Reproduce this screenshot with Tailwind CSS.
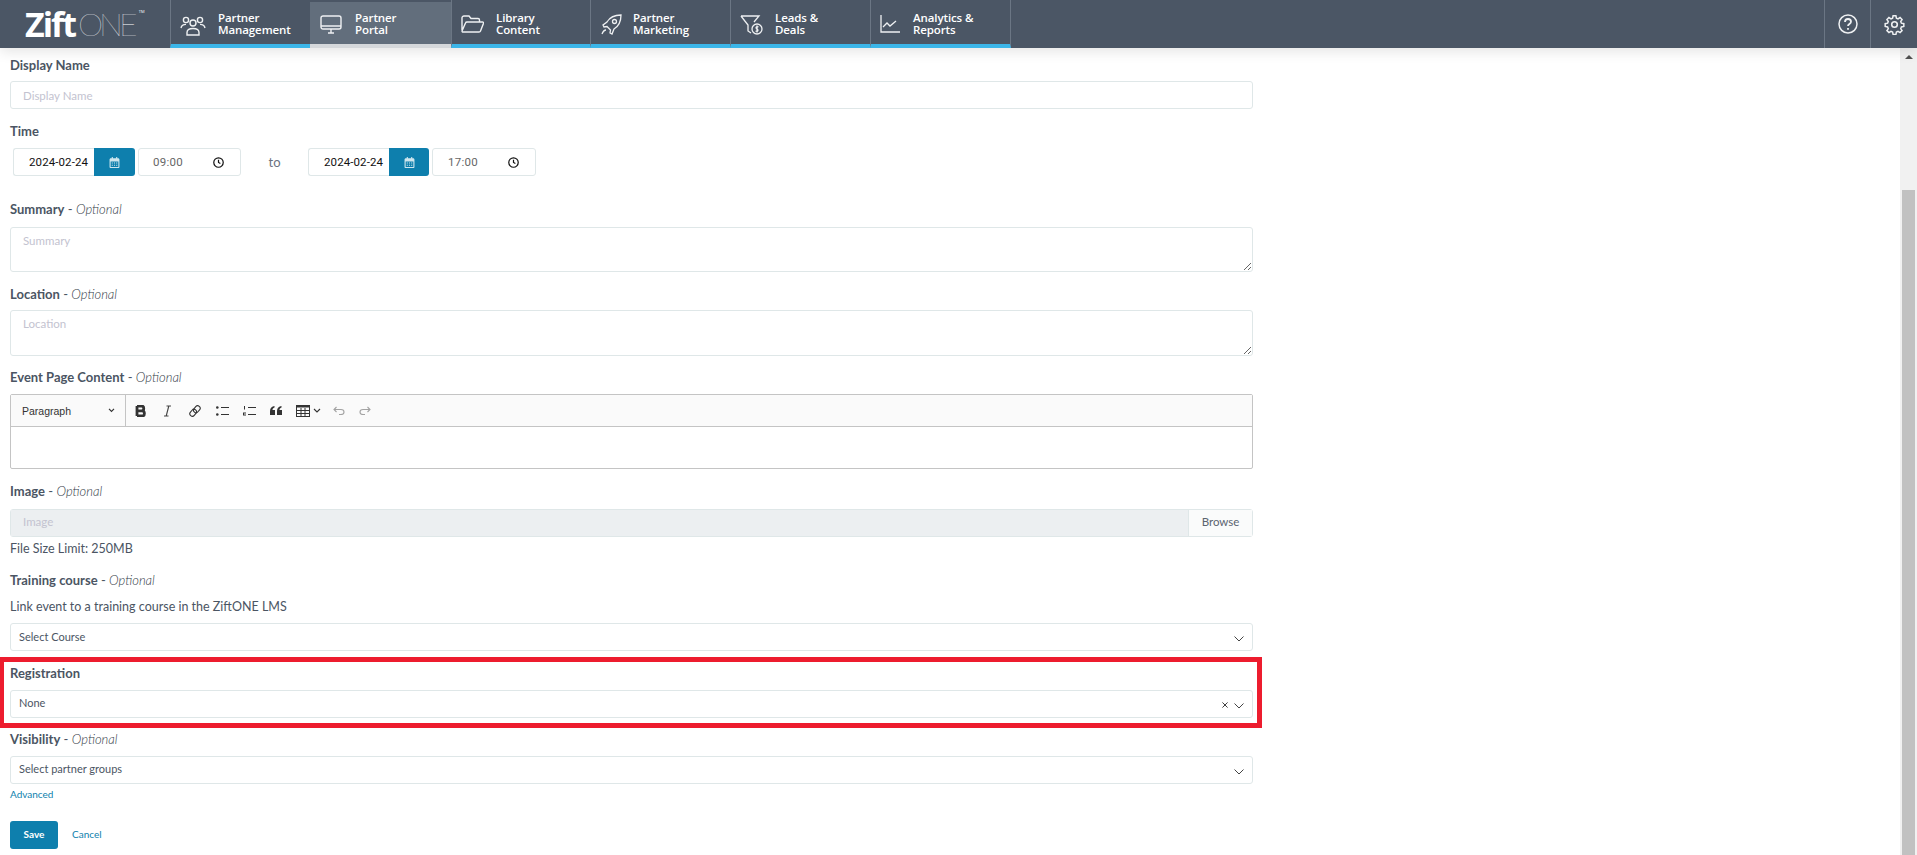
<!DOCTYPE html>
<html lang="en">
<head>
<meta charset="UTF-8">
<title>ZiftONE - Edit Event</title>
<script src="https://cdn.jsdelivr.net/npm/@tailwindcss/browser@4"></script>
</head>
<body class="h-[855px] w-[1917px] overflow-hidden bg-white font-['Lato',sans-serif] text-[#4b5563] flex flex-col">

<!-- Top nav -->
<header class="relative z-10 h-12 shrink-0 flex bg-[#4b5665] shadow-[0_4px_12px_rgba(0,0,0,0.10)] text-white">
  <div class="w-[170px] shrink-0 pl-[25px] flex items-start pt-[4px] font-['Open_Sans',sans-serif] leading-[40px]">
    <span class="text-[34px] font-bold tracking-[-2px]">Zift</span>
    <span class="ml-[3px] text-[32px] font-['Lato',sans-serif] font-thin tracking-[-4px]">ONE</span>
    <span class="text-[4px] leading-[16px] ml-[5px]">TM</span>
  </div>

  <nav class="flex font-['Open_Sans',sans-serif] text-[11.5px] font-semibold leading-[12px] tracking-[-0.1px]">
    <a class="w-[140px] h-12 border-l border-[#6b7684] border-b-4 border-b-[#3bb5e8] flex items-start pt-[12px] pl-[9px] gap-[12px]">
      <svg class="w-[26px] h-[24px] mt-[2px]" viewBox="0 0 26 24" fill="none" stroke="#eef0f2" stroke-width="1.4"><circle cx="6" cy="6" r="2.6"/><circle cx="20" cy="6" r="2.6"/><circle cx="13" cy="9" r="3"/><path d="M1 14c.5-2.5 2.5-3.6 5-3.6M25 14c-.5-2.5-2.500-3.600-5-3.600M7 21v-2.500c0-2.500 2.500-4 6-4s6 1.500 6 4V21z"/></svg>
      <span>Partner<br>Management</span>
    </a>
    <a class="w-[141px] h-[46px] mt-[2px] bg-[#626e7c] border-b-4 border-b-[#d5d8db] flex items-start pt-[10px] pl-[10px] gap-[12px]">
      <svg class="w-[22px] h-[20px] mt-[3px]" viewBox="0 0 22 20" fill="none" stroke="#eef0f2" stroke-width="1.4"><rect x="1" y="1" width="20" height="13" rx="2"/><path d="M1 11h20M8 18h6M11 14v4"/></svg>
      <span class="ml-[1px]">Partner<br>Portal</span>
    </a>
    <a class="w-[139px] h-12 border-l border-[#6b7684] border-b-4 border-b-[#3bb5e8] flex items-start pt-[12px] pl-[9px] gap-[12px]">
      <svg class="w-[23px] h-[18px] mt-[3px]" viewBox="0 0 23 18" fill="none" stroke="#eef0f2" stroke-width="1.400"><path d="M1 15V3c0-1 .7-2 2-2h5l2 2.500h7c1 0 1.500.7 1.500 1.500v2M1 16l3.500-8c.2-.6.800-1 1.500-1h15.500c.8 0 1.200.7 1 1.300L19.500 16c-.2.600-.7 1-1.500 1H2c-.7 0-1-.5-1-1z"/></svg>
      <span>Library<br>Content</span>
    </a>
    <a class="w-[140px] h-12 border-l border-[#6b7684] border-b-4 border-b-[#3bb5e8] flex items-start pt-[12px] pl-[9px] gap-[11px]">
      <svg class="w-[22px] h-[22px] mt-[2px]" viewBox="0 0 22 22" fill="none" stroke="#eef0f2" stroke-width="1.300"><path d="M7 8c3-5 8-7 14-7 0 6-2 11-7 14l-2 5-2-1 .5-3-3.500-3.500-3 .5-1-2zM6 16c-2 0-3 1.500-4 4"/><circle cx="14.500" cy="7.500" r="2"/></svg>
      <span>Partner<br>Marketing</span>
    </a>
    <a class="w-[140px] h-12 border-l border-[#6b7684] border-b-4 border-b-[#3bb5e8] flex items-start pt-[12px] pl-[9px] gap-[12px]">
      <svg class="w-[23px] h-[20px] mt-[3px]" viewBox="0 0 23 20" fill="none" stroke="#eef0f2" stroke-width="1.300"><path d="M1 1h18l-5 6M1 1l7 9v6l3 2"/><circle cx="17" cy="14" r="5"/><path d="M18.500 12c-2-1-3.500 1-1.500 2s.5 3-1.500 2M17 10.500v7"/></svg>
      <span>Leads &amp;<br>Deals</span>
    </a>
    <a class="w-[141px] h-12 border-l border-r border-[#6b7684] border-b-4 border-b-[#3bb5e8] flex items-start pt-[12px] pl-[9px] gap-[13px]">
      <svg class="w-[20px] h-[18px] mt-[3px]" viewBox="0 0 20 18" fill="none" stroke="#eef0f2" stroke-width="1.300"><path d="M1 0v17h19M3 12l4-4 3 3 6-5"/></svg>
      <span>Analytics &amp;<br>Reports</span>
    </a>
  </nav>

  <div class="ml-auto flex h-12">
    <div class="w-[46px] border-l border-[#6b7684] flex items-center justify-center">
      <svg class="w-5 h-5" viewBox="0 0 20 20" fill="none" stroke="#eef0f2" stroke-width="1.500"><circle cx="10" cy="10" r="9"/><path d="M7 8c0-2 1.300-3 3-3s3 1 3 2.700c0 2.300-3 2.300-3 4.300" stroke-width="1.800"/><path d="M10 14v1.800" stroke-width="1.800"/></svg>
    </div>
    <div class="w-[47px] border-l border-[#6b7684] flex items-center justify-center">
      <svg class="w-[21px] h-[21px]" viewBox="0 0 24 24" fill="none" stroke="#eef0f2" stroke-width="1.800"><circle cx="12" cy="12" r="3.200"/><path d="M10.300 2h3.400l.6 2.900 1.900.8 2.500-1.600 2.400 2.400-1.600 2.500.8 1.900 2.900.6v3.400l-2.900.6-.8 1.900 1.600 2.500-2.400 2.400-2.500-1.600-1.900.8-.6 2.900h-3.400l-.6-2.900-1.900-.8-2.500 1.600-2.400-2.400 1.600-2.500-.8-1.900-2.900-.6v-3.400l2.900-.6.8-1.900-1.600-2.500 2.400-2.400 2.500 1.600 1.900-.8z" transform="translate(12 12) scale(.95) translate(-12 -12.500)"/></svg>
    </div>
  </div>
</header>

<div class="flex flex-1 min-h-0">
  <!-- Form -->
  <main class="flex-1 pl-[10px] pt-[7px] text-[13px] leading-[18px]">
    <div class="w-[1243px]">

      <label class="block h-5 leading-5 font-bold">Display Name</label>
      <input placeholder="Display Name" class="mt-[6px] block w-full h-7 px-3 text-[11.500px] bg-white border border-[#dfe7e8] rounded-[3px] placeholder:text-[#c3c3d0]">

      <label class="block h-5 mt-[13px] font-bold">Time</label>
      <div class="mt-[6px] flex items-center h-7 font-['Roboto',sans-serif] text-[11.500px] whitespace-nowrap">
        <div class="ml-[3px] w-[81px] h-7 flex items-center pl-[15px] border border-r-0 border-[#dfe7e8] rounded-l-[3px] text-[#111] tracking-[0.1px]">2024-02-24</div>
        <div class="w-[41px] h-7 bg-[#0e7fad] rounded-r-[3px] flex items-center justify-center">
          <svg class="w-[11px] h-[11px]" viewBox="0 0 9 10" fill="#cfe6ee"><path d="M0 2.500C0 1.700.5 1.200 1.200 1.200H2V0h1v1.200h3V0h1v1.200h.8c.7 0 1.200.5 1.200 1.300V9c0 .6-.5 1-1 1H1c-.5 0-1-.4-1-1zM1 4v5h7V4z"/><path d="M2 5h1v1H2zM4 5h1v1H4zM6 5h1v1H6zM2 7h1v1H2zM4 7h1v1H4zM6 7h1v1H6z"/></svg>
        </div>
        <div class="ml-[3px] w-[103px] h-7 flex items-center justify-between pl-[14px] pr-[16px] border border-[#dfe7e8] rounded-[3px] text-[#666] tracking-[0.3px]">09:00
          <svg class="w-[11px] h-[11px]" viewBox="0 0 10 10" fill="none" stroke="#111" stroke-width="1.100"><circle cx="5" cy="5" r="4.300"/><path d="M5 2.500V5l1.700 1"/></svg>
        </div>
        <span class="w-[67px] pb-[1px] text-center text-[13px] font-['Lato',sans-serif] text-[#6b7280]">to</span>
        <div class="w-[81px] h-7 flex items-center pl-[15px] border border-r-0 border-[#dfe7e8] rounded-l-[3px] text-[#111] tracking-[0.1px]">2024-02-24</div>
        <div class="w-[40px] h-7 bg-[#0e7fad] rounded-r-[3px] flex items-center justify-center">
          <svg class="w-[11px] h-[11px]" viewBox="0 0 9 10" fill="#cfe6ee"><path d="M0 2.500C0 1.700.5 1.200 1.200 1.200H2V0h1v1.200h3V0h1v1.200h.8c.7 0 1.200.5 1.200 1.300V9c0 .6-.5 1-1 1H1c-.5 0-1-.4-1-1zM1 4v5h7V4z"/><path d="M2 5h1v1H2zM4 5h1v1H4zM6 5h1v1H6zM2 7h1v1H2zM4 7h1v1H4zM6 7h1v1H6z"/></svg>
        </div>
        <div class="ml-[3px] w-[104px] h-7 flex items-center justify-between pl-[15px] pr-[16px] border border-[#dfe7e8] rounded-[3px] text-[#666] tracking-[0.3px]">17:00
          <svg class="w-[11px] h-[11px]" viewBox="0 0 10 10" fill="none" stroke="#111" stroke-width="1.100"><circle cx="5" cy="5" r="4.300"/><path d="M5 2.500V5l1.700 1"/></svg>
        </div>
      </div>

      <label class="block h-5 mt-[24px]"><b>Summary</b> - <i class="font-light text-[#333b47]">Optional</i></label>
      <textarea placeholder="Summary" class="mt-[7px] block w-full h-[45px] px-3 py-[5px] text-[11.500px] leading-4 border border-[#dfe7e8] rounded-[3px] placeholder:text-[#c3c3d0]"></textarea>

      <label class="block h-5 mt-[13px]"><b>Location</b> - <i class="font-light text-[#333b47]">Optional</i></label>
      <textarea placeholder="Location" class="mt-[5px] block w-full h-[46px] px-3 py-[5px] text-[11.500px] leading-4 border border-[#dfe7e8] rounded-[3px] placeholder:text-[#c3c3d0]"></textarea>

      <label class="block h-5 mt-[12px]"><b>Event Page Content</b> - <i class="font-light text-[#333b47]">Optional</i></label>
      <div class="mt-[6px] h-[75px] border border-[#c4c4c4] rounded-[2px]">
        <div class="h-[32px] bg-[#fafafa] border-b border-[#c4c4c4] flex items-center text-[#333]">
          <div class="w-[115px] h-full border-r border-[#c4c4c4] flex items-center justify-between pl-[11px] pr-[10px] font-['Liberation_Sans',sans-serif] text-[10.500px]">
            <span>Paragraph</span>
            <svg class="w-[7px] h-[5px]" viewBox="0 0 8 6" fill="none" stroke="#333" stroke-width="1.400"><path d="M1 1l3 3 3-3"/></svg>
          </div>
          <svg class="ml-[9px] w-[11px] h-[12px]" viewBox="0 0 11 12" fill="none" stroke="#333" stroke-width="2.800"><path d="M2 1v10M2 1h4.500c3 0 3 4.800 0 4.800H2M2 5.800h5c3.200 0 3.200 5.200 0 5.200H2"/></svg>
          <svg class="ml-[18px] w-[7px] h-[12px]" viewBox="0 0 7 12" fill="none" stroke="#444" stroke-width="1.100"><path d="M2.500 1H7M0 11h4.500M4.800 1L2.200 11"/></svg>
          <svg class="ml-[18px] w-[12px] h-[12px]" viewBox="0 0 12 12" fill="none" stroke="#333" stroke-width="1.100"><rect x="5.500" y=".5" width="5" height="7.500" rx="2.500" transform="rotate(40 8 4)"/><rect x="1.500" y="4" width="5" height="7.500" rx="2.500" transform="rotate(40 4 8)"/></svg>
          <svg class="ml-[15px] w-[13px] h-[10px]" viewBox="0 0 13 10" fill="#333"><circle cx="1.300" cy="1.500" r="1.300"/><circle cx="1.300" cy="8.500" r="1.300"/><path d="M5 1h8v1H5zM5 8h8v1H5z"/></svg>
          <svg class="ml-[14px] w-[13px] h-[10px]" viewBox="0 0 13 10" fill="#333"><path d="M1 0h1v3.500H1zM0 6.500h3v1H1V8.500h2v1H0zM5 1h8v1H5zM5 8h8v1H5z"/></svg>
          <svg class="ml-[14px] w-[12px] h-[9px]" viewBox="0 0 12 9" fill="#333"><path d="M0 5c0-3 2-4.500 4.500-5v1.500C3.200 2 2.500 3 2.500 4H5v5H0zM7 5c0-3 2-4.500 4.500-5v1.500C10.200 2 9.500 3 9.500 4H12v5H7z"/></svg>
          <svg class="ml-[14px] w-[14px] h-[12px]" viewBox="0 0 14 12" fill="none" stroke="#333"><rect x=".5" y=".5" width="13" height="11"/><path d="M0 1.500h14" stroke-width="2"/><path d="M5 3v8M9 3v8M1 5.500h12M1 8.500h12"/></svg>
          <svg class="ml-[3px] w-[8px] h-[6px]" viewBox="0 0 8 6" fill="none" stroke="#333" stroke-width="1.100"><path d="M1 1l3 3 3-3"/></svg>
          <svg class="ml-[12px] w-[12px] h-[9px]" viewBox="0 0 12 9" fill="none" stroke="#a3a3a3" stroke-width="1.100"><path d="M3.500 1L1 3.500 3.500 6M1 3.500h7c4 0 4 5 0 5H6"/></svg>
          <svg class="ml-[14px] w-[12px] h-[9px]" viewBox="0 0 12 9" fill="none" stroke="#a3a3a3" stroke-width="1.100"><path d="M8.500 1L11 3.500 8.500 6M11 3.500H4c-4 0-4 5 0 5h2"/></svg>
        </div>
      </div>

      <label class="block h-5 mt-[13px]"><b>Image</b> - <i class="font-light text-[#333b47]">Optional</i></label>
      <div class="mt-[7px] flex h-7 border border-[#dfe7e8] rounded-[3px] text-[11.500px]">
        <div class="flex-1 bg-[#eceff1] pl-3 leading-[24px] text-[#c3c3d0]">Image</div>
        <div class="w-[64px] border-l border-[#dfe7e8] bg-[#fafbfb] text-center leading-[24px] text-[#5b6470]">Browse</div>
      </div>
      <p class="mt-[2px] h-5 text-[12.500px] leading-5">File Size Limit: 250MB</p>

      <label class="block h-5 mt-[12px]"><b>Training course</b> - <i class="font-light text-[#333b47]">Optional</i></label>
      <p class="mt-[6px] h-5 text-[12.500px] leading-5">Link event to a training course in the ZiftONE LMS</p>
      <div class="mt-[6px] h-7 flex items-center justify-between pl-[8px] pr-[8px] pb-[1px] border border-[#dfe7e8] rounded-[3px] text-[11px]">
        <span>Select Course</span>
        <svg class="mt-[4px] w-[10px] h-[6px]" viewBox="0 0 10 6" fill="none" stroke="#444"><path d="M.5.500L5 5 9.500.5"/></svg>
      </div>

      <!-- Highlighted field -->
      <section class="relative mt-[13px]">
        <div class="absolute left-[-10px] top-[-7px] w-[1262px] h-[71px] border-[5px] border-l-4 border-[#ed1c2e] pointer-events-none"></div>
        <label class="block h-5 font-bold">Registration</label>
        <div class="mt-[6px] h-7 flex items-center pl-[8px] pr-[8px] pb-[2px] border border-[#dfe7e8] rounded-[3px] text-[11px]">
          <span>None</span>
          <svg class="ml-auto mr-[6px] mt-[3px] w-[6px] h-[6px]" viewBox="0 0 7 7" fill="none" stroke="#333" stroke-width="1.100"><path d="M.5.500l6 6M6.500.500l-6 6"/></svg>
          <svg class="mt-[5px] w-[10px] h-[6px]" viewBox="0 0 10 6" fill="none" stroke="#444"><path d="M.5.500L5 5 9.500.5"/></svg>
        </div>
      </section>

      <label class="block h-5 mt-[12px]"><b>Visibility</b> - <i class="font-light text-[#333b47]">Optional</i></label>
      <div class="mt-[6px] h-7 flex items-center justify-between pl-[8px] pr-[8px] pb-[2px] border border-[#dfe7e8] rounded-[3px] text-[11px]">
        <span>Select partner groups</span>
        <svg class="mt-[5px] w-[10px] h-[6px]" viewBox="0 0 10 6" fill="none" stroke="#444"><path d="M.5.500L5 5 9.500.5"/></svg>
      </div>
      <a class="block mt-[2px] h-5 text-[10px] leading-[17px] text-[#0e7fad]">Advanced</a>

      <div class="mt-[15px] flex items-center">
        <button class="w-12 h-7 pb-[2px] bg-[#0e7fad] rounded-[3px] text-white text-[10px] font-bold">Save</button>
        <a class="ml-[14px] pb-[2px] text-[10px] text-[#0e7fad]">Cancel</a>
      </div>
    </div>
  </main>

  <!-- Scrollbar -->
  <div class="w-[17px] shrink-0 bg-[#f1f1f1] flex flex-col items-center">
    <svg class="mt-[7px] w-[8px] h-[4px]" viewBox="0 0 8 4" fill="#505050"><path d="M4 0l4 4H0z"/></svg>
    <div class="mt-[131px] w-[13px] flex-1 bg-[#c1c1c1]"></div>
  </div>
</div>
</body>
</html>
